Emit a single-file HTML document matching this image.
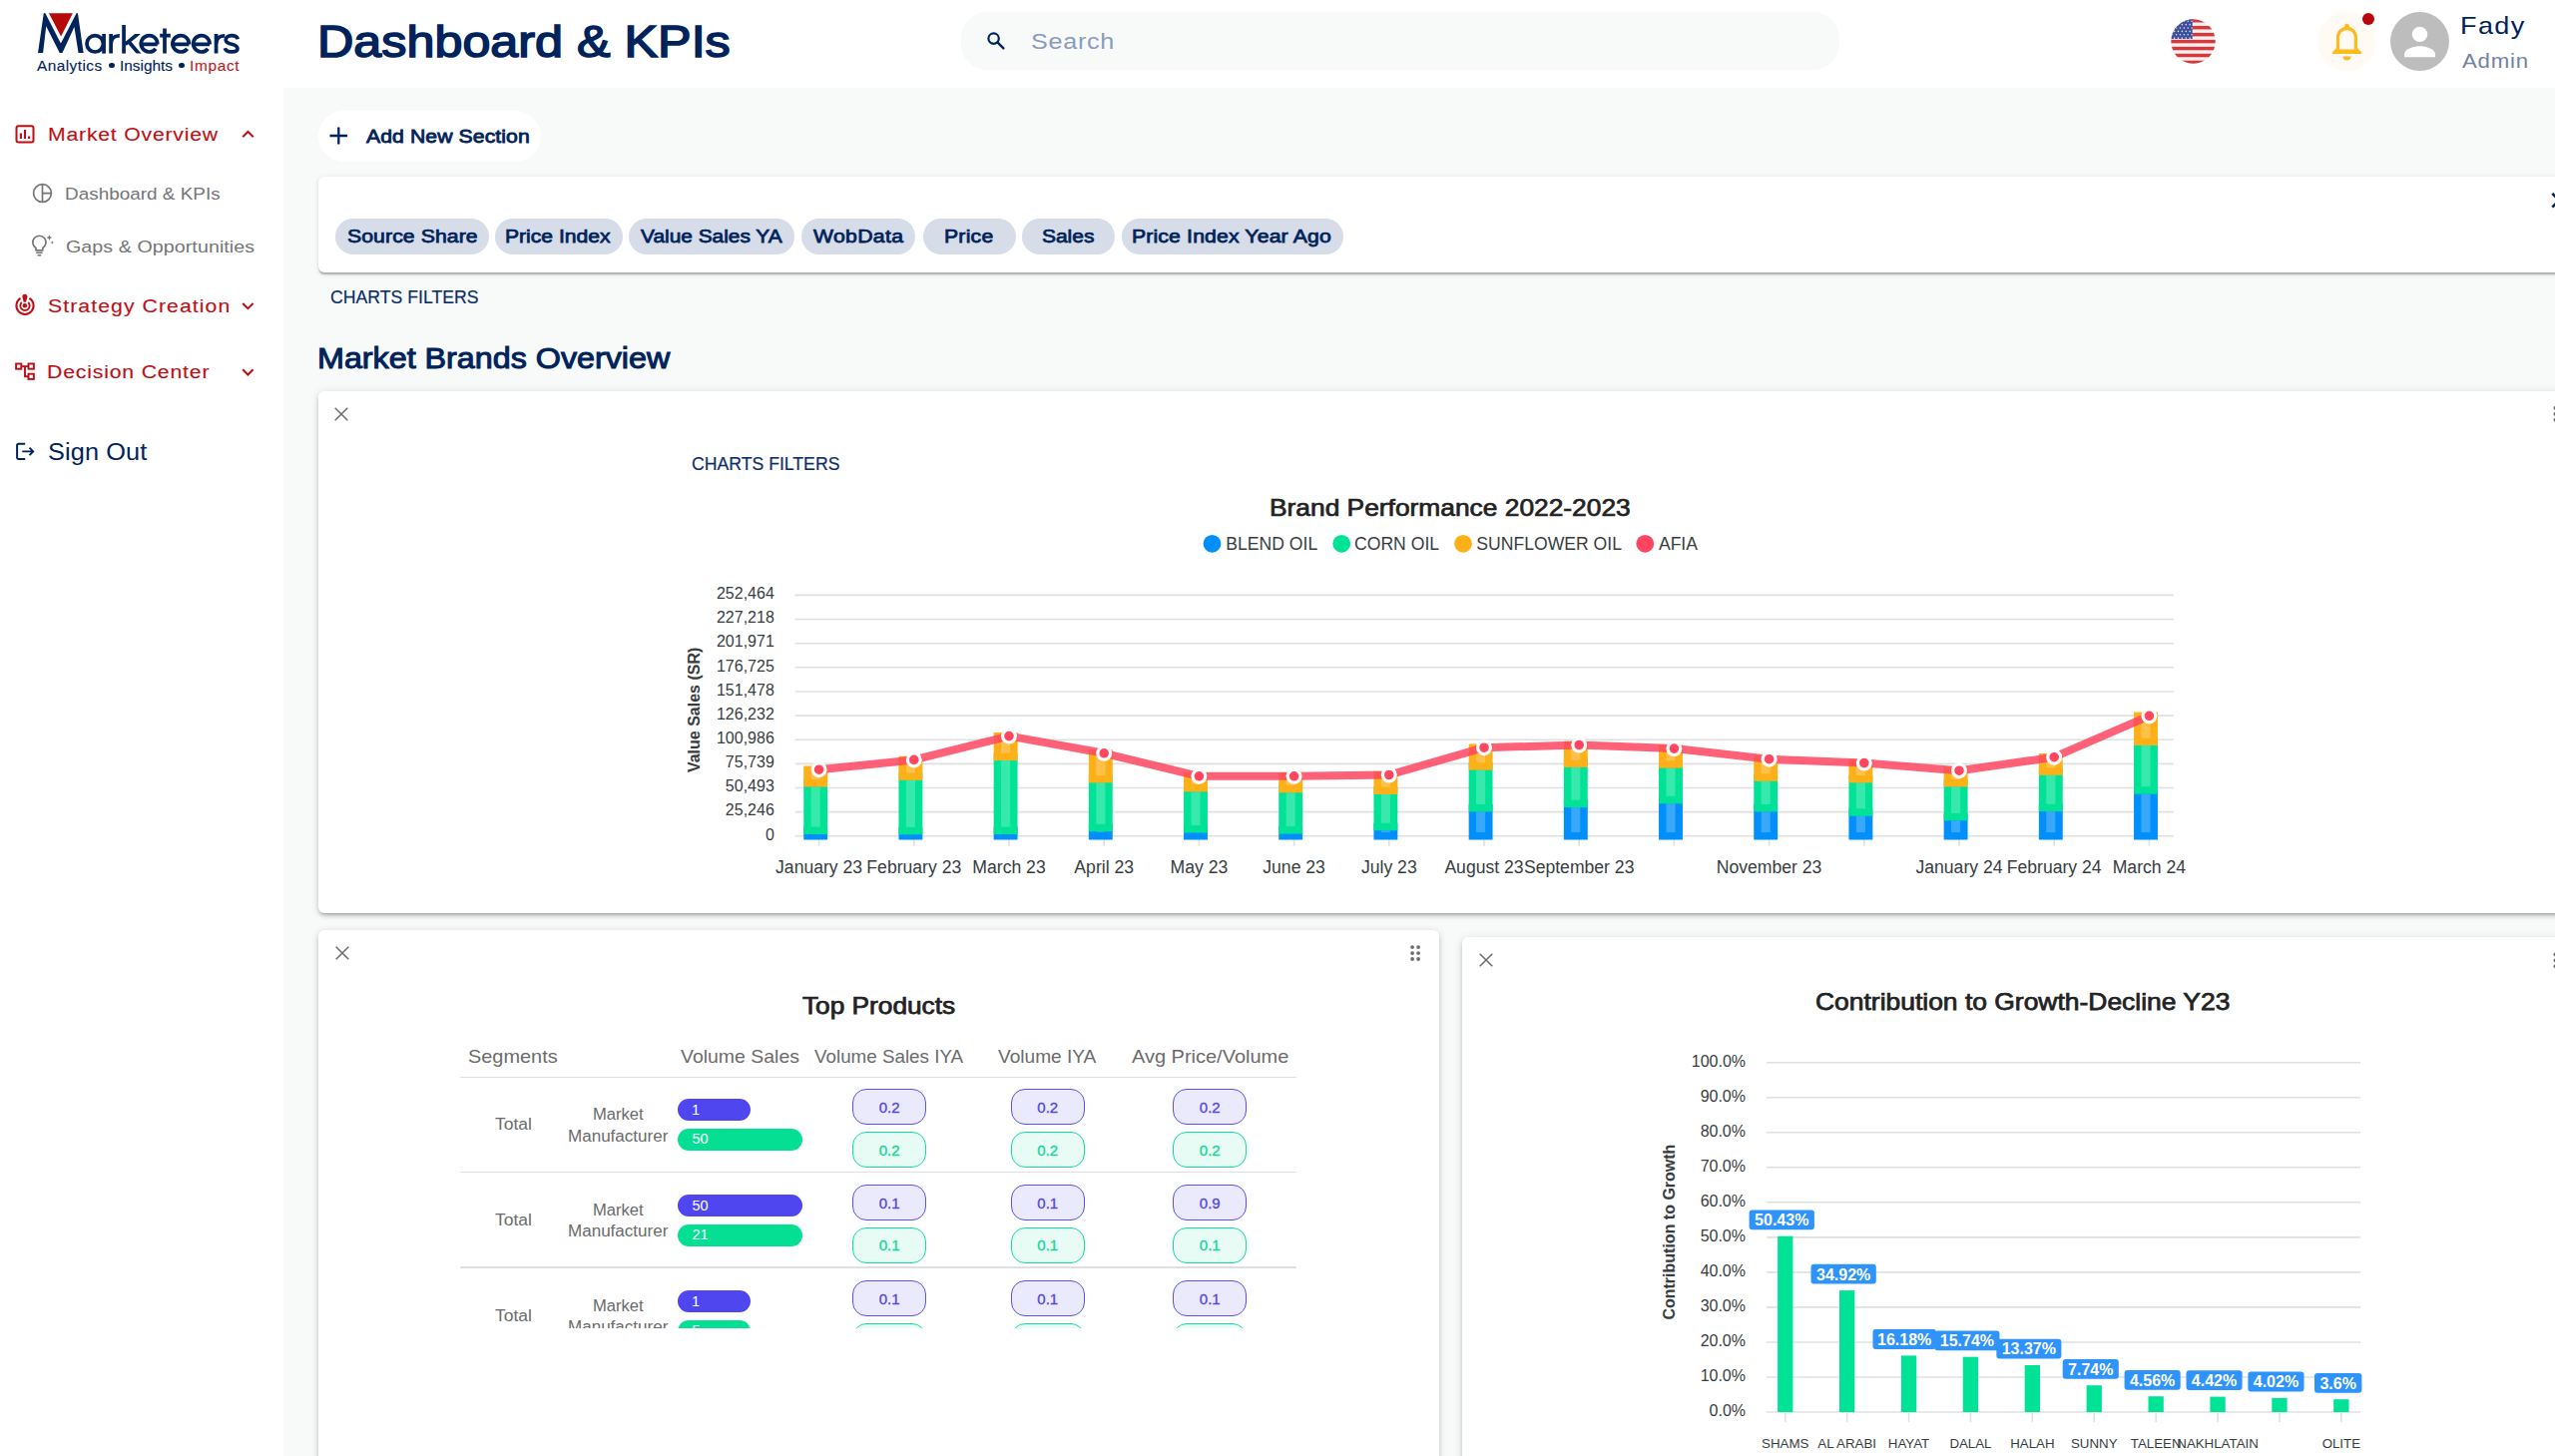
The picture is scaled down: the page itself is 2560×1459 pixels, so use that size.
<!DOCTYPE html>
<html><head><meta charset="utf-8"><title>Dashboard &amp; KPIs</title>
<style>
html,body{margin:0;padding:0;}
body{width:2560px;height:1459px;overflow:hidden;position:relative;background:#f8fafa;font-family:"Liberation Sans",sans-serif;}
.t{position:absolute;white-space:nowrap;line-height:normal;transform-origin:0 0;}
.a{position:absolute;}
.card{position:absolute;background:#fff;border-radius:6px;box-shadow:0 3px 3px -2px rgba(0,0,0,.2),0 3px 4px 0 rgba(0,0,0,.14),0 1px 8px 0 rgba(0,0,0,.12);}
.chip{position:absolute;background:#d6dce8;border-radius:18px;height:36px;top:218.5px;}
svg{position:absolute;overflow:visible;}
</style></head><body>
<div class="a" style="left:0;top:0;width:2560px;height:88px;background:#fff"></div>
<div class="a" style="left:0;top:0;width:283.5px;height:1459px;background:#fff"></div>
<svg style="left:30px;top:5px" width="220" height="78" viewBox="30 5 220 78">
<polygon points="48.99,13.2 72.87,13.2 61.13,36.52" fill="#b5080b"/>
<path d="M38.03,52.96 L43.75,13.4 L44.68,13.03 L45.4,13.3 L60.93,43.57 L76.6,13.3 L77.18,13.03 L78,13.4 L83.64,52.96 L78.55,52.96 L74.44,26.9 L62.5,52.96 L59.76,52.96 L46.25,26.14 L43.12,52.96 Z" fill="#01245c"/>
<g fill="none" stroke="#01245c" stroke-width="3.7">
<circle cx="95.2" cy="43.8" r="8.2"/><path d="M104.1,34 V53.6"/>
<path d="M111.1,34 V53.6 M111.1,44.5 C111.1,38.600 114.2,35.7 119.800,35.9"/>
<path d="M124.05,25 V53.6"/>
<path d="M125.5,44.400 L139.300,33 M128.600,41.2 L140.100,55" clip-path="url(#kc)"/>
<path d="M141.30,44.3 H157.70 M157.70,44.3 A8.2,8.2 0 1 0 156.00,48.8" />
<path d="M165,28.6 V53.6 M160.2,35.650 H170.8"/>
<path d="M172.90,44.3 H189.30 M189.30,44.3 A8.2,8.2 0 1 0 187.60,48.8" /><path d="M193.60,44.3 H210.00 M210.00,44.3 A8.2,8.2 0 1 0 208.30,48.8" />
<path d="M216.55,34 V53.6 M216.55,44.5 C216.55,38.600 219.650,35.7 225.250,35.9"/>
<path d="M238.3,39.2 C237.5,36.600 235,35.7 232,35.7 C228.3,35.7 226.2,37.600 226.2,40 C226.2,42.5 228.400,43.400 232,44.2 C235.8,45.050 238,46.100 238,48.7 C238,51 235.7,51.900 232,51.900 C228.3,51.900 226,50.600 225.3,48.2"/>
</g>
<defs><clipPath id="kc"><rect x="120" y="34" width="25" height="19.6"/></clipPath></defs>
</svg>
<span class="t" style="left:37.35px;top:57.53px;font-size:14px;color:#00235b;letter-spacing:0.403px;transform:scaleX(1.1000);-webkit-text-stroke:0.1px #00235b;">Analytics</span>
<span class="t" style="left:120.48px;top:57.53px;font-size:14px;color:#00235b;letter-spacing:0.000px;transform:scaleX(1.0989);-webkit-text-stroke:0.1px #00235b;">Insights</span>
<span class="t" style="left:190.18px;top:57.53px;font-size:14px;color:#c0161c;letter-spacing:0.600px;transform:scaleX(1.1000);-webkit-text-stroke:0.1px #c0161c;">Impact</span>
<div class="a" style="left:109.4px;top:63px;width:5.2px;height:5.2px;border-radius:50%;background:#00235b"></div>
<div class="a" style="left:179.4px;top:63px;width:5.2px;height:5.2px;border-radius:50%;background:#00235b"></div>
<span class="t" style="left:318.44px;top:17.33px;font-size:44.5px;color:#00235b;letter-spacing:-0.000px;transform:scaleX(1.1302);-webkit-text-stroke:1.6px #00235b;">Dashboard &amp; KPIs</span>
<div class="a" style="left:962.5px;top:11.7px;width:880.5px;height:58px;border-radius:26px;background:#f8fafa"></div>
<svg style="left:989px;top:32px" width="18" height="18" viewBox="0 0 18 18"><circle cx="6.6" cy="6.6" r="5.2" fill="none" stroke="#00235b" stroke-width="2.2"/><path d="M10.4,10.4 L16.4,16.4" stroke="#00235b" stroke-width="2.4" stroke-linecap="round"/></svg>
<span class="t" style="left:1032.50px;top:28.28px;font-size:22.9px;color:#8a9cbc;letter-spacing:0.634px;transform:scaleX(1.1000);">Search</span>
<svg style="left:2175.2px;top:18.6px" width="45" height="45" viewBox="0 0 44 44">
<defs><clipPath id="fc"><circle cx="22" cy="22" r="21.7"/></clipPath></defs>
<g clip-path="url(#fc)">
<rect width="44" height="44" fill="#f1f1f1"/>
<g fill="#d8383b">
<rect y="0" width="44" height="3.4"/><rect y="6.8" width="44" height="3.4"/><rect y="13.6" width="44" height="3.4"/><rect y="20.4" width="44" height="3.4"/><rect y="27.2" width="44" height="3.4"/><rect y="34" width="44" height="3.4"/><rect y="40.8" width="44" height="3.4"/>
</g>
<rect width="21.2" height="19.6" fill="#3c4f9e"/>
<circle cx="1.6" cy="2.2" r="0.75" fill="#fff" fill-opacity="0.85"/><circle cx="5.4" cy="2.2" r="0.75" fill="#fff" fill-opacity="0.85"/><circle cx="9.2" cy="2.2" r="0.75" fill="#fff" fill-opacity="0.85"/><circle cx="13.0" cy="2.2" r="0.75" fill="#fff" fill-opacity="0.85"/><circle cx="16.8" cy="2.2" r="0.75" fill="#fff" fill-opacity="0.85"/><circle cx="20.6" cy="2.2" r="0.75" fill="#fff" fill-opacity="0.85"/><circle cx="3.5" cy="5.5" r="0.75" fill="#fff" fill-opacity="0.85"/><circle cx="7.3" cy="5.5" r="0.75" fill="#fff" fill-opacity="0.85"/><circle cx="11.1" cy="5.5" r="0.75" fill="#fff" fill-opacity="0.85"/><circle cx="14.9" cy="5.5" r="0.75" fill="#fff" fill-opacity="0.85"/><circle cx="18.7" cy="5.5" r="0.75" fill="#fff" fill-opacity="0.85"/><circle cx="22.5" cy="5.5" r="0.75" fill="#fff" fill-opacity="0.85"/><circle cx="1.6" cy="8.8" r="0.75" fill="#fff" fill-opacity="0.85"/><circle cx="5.4" cy="8.8" r="0.75" fill="#fff" fill-opacity="0.85"/><circle cx="9.2" cy="8.8" r="0.75" fill="#fff" fill-opacity="0.85"/><circle cx="13.0" cy="8.8" r="0.75" fill="#fff" fill-opacity="0.85"/><circle cx="16.8" cy="8.8" r="0.75" fill="#fff" fill-opacity="0.85"/><circle cx="20.6" cy="8.8" r="0.75" fill="#fff" fill-opacity="0.85"/><circle cx="3.5" cy="12.1" r="0.75" fill="#fff" fill-opacity="0.85"/><circle cx="7.3" cy="12.1" r="0.75" fill="#fff" fill-opacity="0.85"/><circle cx="11.1" cy="12.1" r="0.75" fill="#fff" fill-opacity="0.85"/><circle cx="14.9" cy="12.1" r="0.75" fill="#fff" fill-opacity="0.85"/><circle cx="18.7" cy="12.1" r="0.75" fill="#fff" fill-opacity="0.85"/><circle cx="22.5" cy="12.1" r="0.75" fill="#fff" fill-opacity="0.85"/><circle cx="1.6" cy="15.4" r="0.75" fill="#fff" fill-opacity="0.85"/><circle cx="5.4" cy="15.4" r="0.75" fill="#fff" fill-opacity="0.85"/><circle cx="9.2" cy="15.4" r="0.75" fill="#fff" fill-opacity="0.85"/><circle cx="13.0" cy="15.4" r="0.75" fill="#fff" fill-opacity="0.85"/><circle cx="16.8" cy="15.4" r="0.75" fill="#fff" fill-opacity="0.85"/><circle cx="20.6" cy="15.4" r="0.75" fill="#fff" fill-opacity="0.85"/><circle cx="3.5" cy="18.7" r="0.75" fill="#fff" fill-opacity="0.85"/><circle cx="7.3" cy="18.7" r="0.75" fill="#fff" fill-opacity="0.85"/><circle cx="11.1" cy="18.7" r="0.75" fill="#fff" fill-opacity="0.85"/><circle cx="14.9" cy="18.7" r="0.75" fill="#fff" fill-opacity="0.85"/><circle cx="18.7" cy="18.7" r="0.75" fill="#fff" fill-opacity="0.85"/><circle cx="22.5" cy="18.7" r="0.75" fill="#fff" fill-opacity="0.85"/>
</g></svg>
<div class="a" style="left:2321.8px;top:11.7px;width:59px;height:59px;border-radius:50%;background:#fffaf3"></div>
<svg style="left:2334.7px;top:21.900px" width="33" height="39.6" viewBox="0 0 30 36">
<path d="M15,1.5 a2.2,2.2 0 0 1 2.2,2.2 v0.9 c4.6,1.1 7.4,5 7.4,9.9 v9.4 l3.6,3.6 v1.6 h-26.4 v-1.6 l3.6,-3.6 v-9.4 c0,-4.9 2.8,-8.8 7.4,-9.9 v-0.9 a2.2,2.2 0 0 1 2.2,-2.2 z M15,7.6 c-4,0 -6.7,3 -6.7,7 v10.4 h13.4 v-10.4 c0,-4 -2.7,-7 -6.7,-7 z" fill="#fdbb1c" fill-rule="evenodd"/>
<path d="M11.4,31.4 h7.2 a3.6,3.6 0 0 1 -7.2,0 z" fill="#fdbb1c"/>
</svg>
<div class="a" style="left:2367.3px;top:13px;width:12px;height:12px;border-radius:50%;background:#b9050b"></div>
<svg style="left:2395.3px;top:11.7px" width="59" height="59" viewBox="0 0 58 58">
<circle cx="29" cy="29" r="29" fill="#bdbdbd"/>
<circle cx="29" cy="22" r="7.6" fill="#fff"/>
<path d="M13.8,44.5 v-3.3 c0,-5 10.1,-7.6 15.2,-7.6 s15.2,2.600 15.2,7.6 v3.3 z" fill="#fff"/>
</svg>
<span class="t" style="left:2465.09px;top:11.94px;font-size:24.6px;color:#00235b;letter-spacing:1.247px;transform:scaleX(1.1000);">Fady</span>
<span class="t" style="left:2467.30px;top:49.72px;font-size:20.2px;color:#7283a3;letter-spacing:0.699px;transform:scaleX(1.1000);">Admin</span>
<svg style="left:14px;top:124px" width="22" height="22" viewBox="14 124 22 22">
<rect x="16.5" y="126.3" width="17" height="16.200" rx="2" fill="none" stroke="#c00d14" stroke-width="2"/>
<path d="M20.9,133.5 v5.5 M25,130 v9 M29.100,136.600 v2.4" stroke="#c00d14" stroke-width="2.1" fill="none"/>
</svg>
<span class="t" style="left:47.76px;top:123.79px;font-size:18.8px;color:#c00d14;letter-spacing:0.690px;transform:scaleX(1.1300);-webkit-text-stroke:0.12px #c00d14;">Market Overview</span>
<svg style="left:240px;top:128px" width="18" height="14" viewBox="240 128 18 14"><path d="M243.2,137.300 L248.5,132 L253.800,137.300" fill="none" stroke="#c00d14" stroke-width="2"/></svg>
<svg style="left:30px;top:182px" width="26" height="24" viewBox="30 182 26 24">
<circle cx="42.5" cy="193.6" r="8.9" fill="none" stroke="#737577" stroke-width="1.7"/>
<path d="M42.5,184.700 v17.8 M42.5,193.6 h8.9" stroke="#737577" stroke-width="1.7" fill="none"/></svg>
<span class="t" style="left:65.35px;top:184.45px;font-size:17.4px;color:#737577;letter-spacing:0.000px;transform:scaleX(1.0881);">Dashboard &amp; KPIs</span>
<svg style="left:30px;top:233px" width="26" height="26" viewBox="30 233 26 26">
<path d="M36,248.5 a6.6,6.6 0 1 1 6.8,0 v2.3 h-6.8 z" fill="none" stroke="#737577" stroke-width="1.7" stroke-linejoin="round"/>
<path d="M36.2,253.300 h6.4 M37.600,255.700 h3.6" stroke="#737577" stroke-width="1.5"/>
<path d="M49.400,235.300 l0.800,2 l2,0.800 l-2,0.800 l-0.800,2 l-0.800,-2 l-2,-0.800 l2,-0.800 z M52.3,241.300 l0.500,1.200 l1.200,0.500 l-1.200,0.500 l-0.500,1.200 l-0.500,-1.200 l-1.200,-0.500 l1.200,-0.500 z" fill="#737577"/>
</svg>
<span class="t" style="left:65.86px;top:237.15px;font-size:17.4px;color:#737577;letter-spacing:0.056px;transform:scaleX(1.1300);">Gaps &amp; Opportunities</span>
<svg style="left:13px;top:292px" width="24" height="26" viewBox="13 292 24 26">
<path d="M20.600,298.900 a8.6,8.6 0 1 0 8.800,0" fill="none" stroke="#c00d14" stroke-width="2"/>
<path d="M21.8,303 a4.700,4.700 0 1 0 6.4,0" fill="none" stroke="#c00d14" stroke-width="1.8"/>
<circle cx="24.9" cy="306.300" r="2.2" fill="#c00d14"/>
<path d="M22.4,297.2 a2.5,2.5 0 0 1 5,0 l-1.300,5.500 h-2.400 z" fill="#c00d14"/>
</svg>
<span class="t" style="left:48.21px;top:295.99px;font-size:18.8px;color:#c00d14;letter-spacing:0.942px;transform:scaleX(1.1300);-webkit-text-stroke:0.12px #c00d14;">Strategy Creation</span>
<svg style="left:240px;top:300px" width="18" height="14" viewBox="240 300 18 14"><path d="M243.2,304 L248.400,309.2 L253.600,304" fill="none" stroke="#c00d14" stroke-width="2"/></svg>
<svg style="left:13px;top:361px" width="24" height="22" viewBox="13 361 24 22">
<g fill="none" stroke="#c00d14" stroke-width="1.9">
<rect x="16.100" y="364.5" width="5.2" height="5.2"/>
<rect x="28.5" y="364.5" width="5.4" height="5.2"/>
<rect x="28.5" y="374.700" width="5.4" height="5.2"/>
<path d="M21.3,367.100 h7.2 M25,367.100 v10.200 h3.5"/>
</g></svg>
<span class="t" style="left:47.36px;top:362.19px;font-size:18.8px;color:#c00d14;letter-spacing:0.727px;transform:scaleX(1.1300);-webkit-text-stroke:0.12px #c00d14;">Decision Center</span>
<svg style="left:240px;top:366px" width="18" height="14" viewBox="240 366 18 14"><path d="M243.2,370.300 L248.400,375.5 L253.600,370.300" fill="none" stroke="#c00d14" stroke-width="2"/></svg>
<svg style="left:13px;top:441px" width="24" height="24" viewBox="13 441 24 24">
<path d="M25.2,444.800 h-6.600 a1.500,1.500 0 0 0 -1.500,1.500 v12.300 a1.500,1.500 0 0 0 1.500,1.500 h6.600" fill="none" stroke="#00235b" stroke-width="2"/>
<path d="M22.300,452.400 h10.600 M29.5,448.700 l3.700,3.700 l-3.700,3.700" fill="none" stroke="#00235b" stroke-width="1.9"/>
</svg>
<span class="t" style="left:48.20px;top:439.58px;font-size:23px;color:#00235b;letter-spacing:0.094px;transform:scaleX(1.1000);">Sign Out</span>
<div class="a" style="left:319px;top:110.5px;width:223px;height:51px;border-radius:26px;background:#fff"></div>
<svg style="left:329px;top:126px" width="20" height="20" viewBox="329 126 20 20"><path d="M339.300,127.600 v16.9 M330.5,136 h17.600" stroke="#00235b" stroke-width="2.3" fill="none"/></svg>
<span class="t" style="left:367.15px;top:125.69px;font-size:18.8px;color:#00235b;letter-spacing:0.061px;transform:scaleX(1.1300);-webkit-text-stroke:0.8px #00235b;">Add New Section</span>
<div class="card" style="left:319px;top:177px;width:2260px;height:95.800px;box-shadow:0 2.600px 1.6px -1.6px rgba(0,0,0,.15),0 1.6px 1.6px 0 rgba(0,0,0,.12),0 1.6px 4.8px 0 rgba(0,0,0,.1)"></div>
<svg style="left:2550px;top:190px" width="10" height="22" viewBox="2550 190 10 22"><path d="M2557.3,193.800 L2564,200.7 L2557.3,207.600" fill="none" stroke="#00235b" stroke-width="2.6"/></svg>
<div class="chip" style="left:336.4px;width:153.40000000000003px"></div>
<span class="t" style="left:347.68px;top:225.69px;font-size:18.8px;color:#00235b;letter-spacing:0.067px;transform:scaleX(1.1300);-webkit-text-stroke:0.75px #00235b;">Source Share</span>
<div class="chip" style="left:496.1px;width:127.5px"></div>
<span class="t" style="left:506.24px;top:225.69px;font-size:18.8px;color:#00235b;letter-spacing:0.000px;transform:scaleX(1.1228);-webkit-text-stroke:0.75px #00235b;">Price Index</span>
<div class="chip" style="left:630px;width:166.20000000000005px"></div>
<span class="t" style="left:642.18px;top:225.69px;font-size:18.8px;color:#00235b;letter-spacing:0.000px;transform:scaleX(1.1118);-webkit-text-stroke:0.75px #00235b;">Value Sales YA</span>
<div class="chip" style="left:802.6px;width:114.39999999999998px"></div>
<span class="t" style="left:814.67px;top:225.69px;font-size:18.8px;color:#00235b;letter-spacing:0.277px;transform:scaleX(1.1300);-webkit-text-stroke:0.75px #00235b;">WobData</span>
<div class="chip" style="left:924.7px;width:92.89999999999998px"></div>
<span class="t" style="left:946.08px;top:225.69px;font-size:18.8px;color:#00235b;letter-spacing:0.191px;transform:scaleX(1.1300);-webkit-text-stroke:0.75px #00235b;">Price</span>
<div class="chip" style="left:1024.1px;width:92.90000000000009px"></div>
<span class="t" style="left:1044.29px;top:225.69px;font-size:18.8px;color:#00235b;letter-spacing:0.000px;transform:scaleX(1.1146);-webkit-text-stroke:0.75px #00235b;">Sales</span>
<div class="chip" style="left:1124.2px;width:221.5px"></div>
<span class="t" style="left:1134.48px;top:225.69px;font-size:18.8px;color:#00235b;letter-spacing:0.124px;transform:scaleX(1.1300);-webkit-text-stroke:0.75px #00235b;">Price Index Year Ago</span>
<span class="t" style="left:330.70px;top:287.41px;font-size:19px;color:#0b2e66;letter-spacing:0.000px;transform:scaleX(0.9295);-webkit-text-stroke:0.2px #0b2e66;">CHARTS FILTERS</span>
<span class="t" style="left:318.00px;top:342.65px;font-size:28.9px;color:#00235b;letter-spacing:0.000px;transform:scaleX(1.1170);-webkit-text-stroke:1.0px #00235b;">Market Brands Overview</span>
<div class="card" style="left:319px;top:391.7px;width:2260px;height:523.5px"></div>
<div class="card" style="left:319px;top:931.8px;width:1123px;height:560px"></div>
<div class="card" style="left:1465.1px;top:938.8px;width:1120px;height:560px"></div>
<svg style="left:332.3px;top:404.8px" width="20" height="20" viewBox="-10 -10 20 20"><path d="M-6.3,-6.3 L6.3,6.3 M6.3,-6.3 L-6.3,6.3" stroke="#6c6c6f" stroke-width="1.5" fill="none"/></svg>
<span class="t" style="left:693.30px;top:453.91px;font-size:19px;color:#0b2e66;letter-spacing:0.000px;transform:scaleX(0.9289);-webkit-text-stroke:0.2px #0b2e66;">CHARTS FILTERS</span>
<span class="t" style="left:1271.84px;top:496.14px;font-size:23.6px;color:#222;letter-spacing:0.000px;transform:scaleX(1.1165);-webkit-text-stroke:0.7px #222;">Brand Performance 2022-2023</span>
<svg style="left:0;top:0" width="2560" height="1459" viewBox="0 0 2560 1459" font-family="Liberation Sans, sans-serif">
<circle cx="1214.5" cy="544.8" r="8.9" fill="#008ffb"/>
<text x="1228.3" y="550.7" font-size="17.6" fill="#373d3f">BLEND OIL</text>
<circle cx="1344.2" cy="544.8" r="8.9" fill="#00e396"/>
<text x="1357" y="550.7" font-size="17.6" fill="#373d3f">CORN OIL</text>
<circle cx="1466" cy="544.8" r="8.9" fill="#feb019"/>
<text x="1479.3" y="550.7" font-size="17.6" fill="#373d3f">SUNFLOWER OIL</text>
<circle cx="1648.3" cy="544.8" r="8.9" fill="#ff4560"/>
<text x="1661.9" y="550.7" font-size="17.6" fill="#373d3f">AFIA</text>
<line x1="796.6" x2="2177.9" y1="596.40" y2="596.40" stroke="#e0e0e0" stroke-width="1.6"/>
<text x="775.8" y="600.10" font-size="16" fill="#373d3f" text-anchor="end">252,464</text>
<line x1="796.6" x2="2177.9" y1="620.54" y2="620.54" stroke="#e0e0e0" stroke-width="1.6"/>
<text x="775.8" y="624.24" font-size="16" fill="#373d3f" text-anchor="end">227,218</text>
<line x1="796.6" x2="2177.9" y1="644.68" y2="644.68" stroke="#e0e0e0" stroke-width="1.6"/>
<text x="775.8" y="648.38" font-size="16" fill="#373d3f" text-anchor="end">201,971</text>
<line x1="796.6" x2="2177.9" y1="668.82" y2="668.82" stroke="#e0e0e0" stroke-width="1.6"/>
<text x="775.8" y="672.52" font-size="16" fill="#373d3f" text-anchor="end">176,725</text>
<line x1="796.6" x2="2177.9" y1="692.96" y2="692.96" stroke="#e0e0e0" stroke-width="1.6"/>
<text x="775.8" y="696.66" font-size="16" fill="#373d3f" text-anchor="end">151,478</text>
<line x1="796.6" x2="2177.9" y1="717.10" y2="717.10" stroke="#e0e0e0" stroke-width="1.6"/>
<text x="775.8" y="720.80" font-size="16" fill="#373d3f" text-anchor="end">126,232</text>
<line x1="796.6" x2="2177.9" y1="741.24" y2="741.24" stroke="#e0e0e0" stroke-width="1.6"/>
<text x="775.8" y="744.94" font-size="16" fill="#373d3f" text-anchor="end">100,986</text>
<line x1="796.6" x2="2177.9" y1="765.38" y2="765.38" stroke="#e0e0e0" stroke-width="1.6"/>
<text x="775.8" y="769.08" font-size="16" fill="#373d3f" text-anchor="end">75,739</text>
<line x1="796.6" x2="2177.9" y1="789.52" y2="789.52" stroke="#e0e0e0" stroke-width="1.6"/>
<text x="775.8" y="793.22" font-size="16" fill="#373d3f" text-anchor="end">50,493</text>
<line x1="796.6" x2="2177.9" y1="813.66" y2="813.66" stroke="#e0e0e0" stroke-width="1.6"/>
<text x="775.8" y="817.36" font-size="16" fill="#373d3f" text-anchor="end">25,246</text>
<line x1="796.6" x2="2177.9" y1="837.80" y2="837.80" stroke="#e0e0e0" stroke-width="1.6"/>
<text x="775.8" y="841.50" font-size="16" fill="#373d3f" text-anchor="end">0</text>
<text transform="translate(700.8,711.4) rotate(-90)" font-size="16" font-weight="700" fill="#373d3f" text-anchor="middle">Value Sales (SR)</text>
<line x1="820.60" x2="820.60" y1="838.5999999999999" y2="847.7" stroke="#e0e0e0" stroke-width="1.6"/>
<line x1="915.80" x2="915.80" y1="838.5999999999999" y2="847.7" stroke="#e0e0e0" stroke-width="1.6"/>
<line x1="1011.00" x2="1011.00" y1="838.5999999999999" y2="847.7" stroke="#e0e0e0" stroke-width="1.6"/>
<line x1="1106.20" x2="1106.20" y1="838.5999999999999" y2="847.7" stroke="#e0e0e0" stroke-width="1.6"/>
<line x1="1201.40" x2="1201.40" y1="838.5999999999999" y2="847.7" stroke="#e0e0e0" stroke-width="1.6"/>
<line x1="1296.60" x2="1296.60" y1="838.5999999999999" y2="847.7" stroke="#e0e0e0" stroke-width="1.6"/>
<line x1="1391.80" x2="1391.80" y1="838.5999999999999" y2="847.7" stroke="#e0e0e0" stroke-width="1.6"/>
<line x1="1487.00" x2="1487.00" y1="838.5999999999999" y2="847.7" stroke="#e0e0e0" stroke-width="1.6"/>
<line x1="1582.20" x2="1582.20" y1="838.5999999999999" y2="847.7" stroke="#e0e0e0" stroke-width="1.6"/>
<line x1="1677.40" x2="1677.40" y1="838.5999999999999" y2="847.7" stroke="#e0e0e0" stroke-width="1.6"/>
<line x1="1772.60" x2="1772.60" y1="838.5999999999999" y2="847.7" stroke="#e0e0e0" stroke-width="1.6"/>
<line x1="1867.80" x2="1867.80" y1="838.5999999999999" y2="847.7" stroke="#e0e0e0" stroke-width="1.6"/>
<line x1="1963.00" x2="1963.00" y1="838.5999999999999" y2="847.7" stroke="#e0e0e0" stroke-width="1.6"/>
<line x1="2058.20" x2="2058.20" y1="838.5999999999999" y2="847.7" stroke="#e0e0e0" stroke-width="1.6"/>
<line x1="2153.40" x2="2153.40" y1="838.5999999999999" y2="847.7" stroke="#e0e0e0" stroke-width="1.6"/>
<rect x="808.95" y="832.30" width="16.5" height="5.50" fill="#38a8fc" stroke="#008ffb" stroke-width="7.4"/>
<rect x="808.95" y="784.80" width="16.5" height="47.50" fill="#38e9ad" stroke="#00e396" stroke-width="7.4"/>
<rect x="808.95" y="771.20" width="16.5" height="13.60" fill="#fec14c" stroke="#feb019" stroke-width="7.4"/>
<rect x="904.15" y="832.60" width="16.5" height="5.20" fill="#38a8fc" stroke="#008ffb" stroke-width="7.4"/>
<rect x="904.15" y="778.10" width="16.5" height="54.50" fill="#38e9ad" stroke="#00e396" stroke-width="7.4"/>
<rect x="904.15" y="761.40" width="16.5" height="16.70" fill="#fec14c" stroke="#feb019" stroke-width="7.4"/>
<rect x="999.35" y="832.30" width="16.5" height="5.50" fill="#38a8fc" stroke="#008ffb" stroke-width="7.4"/>
<rect x="999.35" y="758.40" width="16.5" height="73.90" fill="#38e9ad" stroke="#00e396" stroke-width="7.4"/>
<rect x="999.35" y="737.60" width="16.5" height="20.80" fill="#fec14c" stroke="#feb019" stroke-width="7.4"/>
<rect x="1094.55" y="829.50" width="16.5" height="8.30" fill="#38a8fc" stroke="#008ffb" stroke-width="7.4"/>
<rect x="1094.55" y="780.70" width="16.5" height="48.80" fill="#38e9ad" stroke="#00e396" stroke-width="7.4"/>
<rect x="1094.55" y="754.80" width="16.5" height="25.90" fill="#fec14c" stroke="#feb019" stroke-width="7.4"/>
<rect x="1189.75" y="830.80" width="16.5" height="7.00" fill="#38a8fc" stroke="#008ffb" stroke-width="7.4"/>
<rect x="1189.75" y="789.60" width="16.5" height="41.20" fill="#38e9ad" stroke="#00e396" stroke-width="7.4"/>
<rect x="1189.75" y="777.80" width="16.5" height="11.80" fill="#fec14c" stroke="#feb019" stroke-width="7.4"/>
<rect x="1284.95" y="831.80" width="16.5" height="6.00" fill="#38a8fc" stroke="#008ffb" stroke-width="7.4"/>
<rect x="1284.95" y="790.60" width="16.5" height="41.20" fill="#38e9ad" stroke="#00e396" stroke-width="7.4"/>
<rect x="1284.95" y="777.80" width="16.5" height="12.80" fill="#fec14c" stroke="#feb019" stroke-width="7.4"/>
<rect x="1380.15" y="828.50" width="16.5" height="9.30" fill="#38a8fc" stroke="#008ffb" stroke-width="7.4"/>
<rect x="1380.15" y="792.30" width="16.5" height="36.20" fill="#38e9ad" stroke="#00e396" stroke-width="7.4"/>
<rect x="1380.15" y="776.50" width="16.5" height="15.80" fill="#fec14c" stroke="#feb019" stroke-width="7.4"/>
<rect x="1475.35" y="809.70" width="16.5" height="28.10" fill="#38a8fc" stroke="#008ffb" stroke-width="7.4"/>
<rect x="1475.35" y="767.90" width="16.5" height="41.80" fill="#38e9ad" stroke="#00e396" stroke-width="7.4"/>
<rect x="1475.35" y="749.20" width="16.5" height="18.70" fill="#fec14c" stroke="#feb019" stroke-width="7.4"/>
<rect x="1570.55" y="805.40" width="16.5" height="32.40" fill="#38a8fc" stroke="#008ffb" stroke-width="7.4"/>
<rect x="1570.55" y="765.20" width="16.5" height="40.20" fill="#38e9ad" stroke="#00e396" stroke-width="7.4"/>
<rect x="1570.55" y="746.50" width="16.5" height="18.70" fill="#fec14c" stroke="#feb019" stroke-width="7.4"/>
<rect x="1665.75" y="801.50" width="16.5" height="36.30" fill="#38a8fc" stroke="#008ffb" stroke-width="7.4"/>
<rect x="1665.75" y="765.90" width="16.5" height="35.60" fill="#38e9ad" stroke="#00e396" stroke-width="7.4"/>
<rect x="1665.75" y="750.10" width="16.5" height="15.80" fill="#fec14c" stroke="#feb019" stroke-width="7.4"/>
<rect x="1760.95" y="809.70" width="16.5" height="28.10" fill="#38a8fc" stroke="#008ffb" stroke-width="7.4"/>
<rect x="1760.95" y="779.10" width="16.5" height="30.60" fill="#38e9ad" stroke="#00e396" stroke-width="7.4"/>
<rect x="1760.95" y="760.70" width="16.5" height="18.40" fill="#fec14c" stroke="#feb019" stroke-width="7.4"/>
<rect x="1856.15" y="814.00" width="16.5" height="23.80" fill="#38a8fc" stroke="#008ffb" stroke-width="7.4"/>
<rect x="1856.15" y="780.70" width="16.5" height="33.30" fill="#38e9ad" stroke="#00e396" stroke-width="7.4"/>
<rect x="1856.15" y="764.60" width="16.5" height="16.10" fill="#fec14c" stroke="#feb019" stroke-width="7.4"/>
<rect x="1951.35" y="818.60" width="16.5" height="19.20" fill="#38a8fc" stroke="#008ffb" stroke-width="7.4"/>
<rect x="1951.35" y="784.70" width="16.5" height="33.90" fill="#38e9ad" stroke="#00e396" stroke-width="7.4"/>
<rect x="1951.35" y="772.20" width="16.5" height="12.50" fill="#fec14c" stroke="#feb019" stroke-width="7.4"/>
<rect x="2046.55" y="809.40" width="16.5" height="28.40" fill="#38a8fc" stroke="#008ffb" stroke-width="7.4"/>
<rect x="2046.55" y="773.10" width="16.5" height="36.30" fill="#38e9ad" stroke="#00e396" stroke-width="7.4"/>
<rect x="2046.55" y="758.70" width="16.5" height="14.40" fill="#fec14c" stroke="#feb019" stroke-width="7.4"/>
<rect x="2141.75" y="791.90" width="16.5" height="45.90" fill="#38a8fc" stroke="#008ffb" stroke-width="7.4"/>
<rect x="2141.75" y="743.30" width="16.5" height="48.60" fill="#38e9ad" stroke="#00e396" stroke-width="7.4"/>
<rect x="2141.75" y="717.30" width="16.5" height="26.00" fill="#fec14c" stroke="#feb019" stroke-width="7.4"/>
<polyline points="820.60,771.20 915.80,761.40 1011.00,737.60 1106.20,754.80 1201.40,777.80 1296.60,777.80 1391.80,776.50 1487.00,749.20 1582.20,746.50 1677.40,750.10 1772.60,760.70 1867.80,764.60 1963.00,772.20 2058.20,758.70 2153.40,717.30" fill="none" stroke="#ff4560" stroke-opacity="0.85" stroke-width="8" stroke-linejoin="round" stroke-linecap="butt"/>
<circle cx="820.60" cy="771.20" r="6.4" fill="#ff4560" stroke="#fff" stroke-width="3.2"/>
<circle cx="915.80" cy="761.40" r="6.4" fill="#ff4560" stroke="#fff" stroke-width="3.2"/>
<circle cx="1011.00" cy="737.60" r="6.4" fill="#ff4560" stroke="#fff" stroke-width="3.2"/>
<circle cx="1106.20" cy="754.80" r="6.4" fill="#ff4560" stroke="#fff" stroke-width="3.2"/>
<circle cx="1201.40" cy="777.80" r="6.4" fill="#ff4560" stroke="#fff" stroke-width="3.2"/>
<circle cx="1296.60" cy="777.80" r="6.4" fill="#ff4560" stroke="#fff" stroke-width="3.2"/>
<circle cx="1391.80" cy="776.50" r="6.4" fill="#ff4560" stroke="#fff" stroke-width="3.2"/>
<circle cx="1487.00" cy="749.20" r="6.4" fill="#ff4560" stroke="#fff" stroke-width="3.2"/>
<circle cx="1582.20" cy="746.50" r="6.4" fill="#ff4560" stroke="#fff" stroke-width="3.2"/>
<circle cx="1677.40" cy="750.10" r="6.4" fill="#ff4560" stroke="#fff" stroke-width="3.2"/>
<circle cx="1772.60" cy="760.70" r="6.4" fill="#ff4560" stroke="#fff" stroke-width="3.2"/>
<circle cx="1867.80" cy="764.60" r="6.4" fill="#ff4560" stroke="#fff" stroke-width="3.2"/>
<circle cx="1963.00" cy="772.20" r="6.4" fill="#ff4560" stroke="#fff" stroke-width="3.2"/>
<circle cx="2058.20" cy="758.70" r="6.4" fill="#ff4560" stroke="#fff" stroke-width="3.2"/>
<circle cx="2153.40" cy="717.30" r="6.4" fill="#ff4560" stroke="#fff" stroke-width="3.2"/>
<text x="820.60" y="875.1" font-size="17.6" fill="#373d3f" text-anchor="middle">January 23</text>
<text x="915.80" y="875.1" font-size="17.6" fill="#373d3f" text-anchor="middle">February 23</text>
<text x="1011.00" y="875.1" font-size="17.6" fill="#373d3f" text-anchor="middle">March 23</text>
<text x="1106.20" y="875.1" font-size="17.6" fill="#373d3f" text-anchor="middle">April 23</text>
<text x="1201.40" y="875.1" font-size="17.6" fill="#373d3f" text-anchor="middle">May 23</text>
<text x="1296.60" y="875.1" font-size="17.6" fill="#373d3f" text-anchor="middle">June 23</text>
<text x="1391.80" y="875.1" font-size="17.6" fill="#373d3f" text-anchor="middle">July 23</text>
<text x="1487.00" y="875.1" font-size="17.6" fill="#373d3f" text-anchor="middle">August 23</text>
<text x="1582.20" y="875.1" font-size="17.6" fill="#373d3f" text-anchor="middle">September 23</text>
<text x="1772.60" y="875.1" font-size="17.6" fill="#373d3f" text-anchor="middle">November 23</text>
<text x="1963.00" y="875.1" font-size="17.6" fill="#373d3f" text-anchor="middle">January 24</text>
<text x="2058.20" y="875.1" font-size="17.6" fill="#373d3f" text-anchor="middle">February 24</text>
<text x="2153.40" y="875.1" font-size="17.6" fill="#373d3f" text-anchor="middle">March 24</text>
</svg>
<svg style="left:332.5px;top:944.8px" width="20" height="20" viewBox="-10 -10 20 20"><path d="M-6.3,-6.3 L6.3,6.3 M6.3,-6.3 L-6.3,6.3" stroke="#6c6c6f" stroke-width="1.5" fill="none"/></svg>
<svg style="left:0;top:0" width="2560" height="1459"><circle cx="1415.1" cy="949.1" r="1.9" fill="#6e6e72"/><circle cx="1415.1" cy="955.1" r="1.9" fill="#6e6e72"/><circle cx="1415.1" cy="961" r="1.9" fill="#6e6e72"/><circle cx="1421.1" cy="949.1" r="1.9" fill="#6e6e72"/><circle cx="1421.1" cy="955.1" r="1.9" fill="#6e6e72"/><circle cx="1421.1" cy="961" r="1.9" fill="#6e6e72"/><circle cx="2560.4" cy="408.9" r="1.9" fill="#6e6e72"/><circle cx="2560.4" cy="414.9" r="1.9" fill="#6e6e72"/><circle cx="2560.4" cy="420.8" r="1.9" fill="#6e6e72"/><circle cx="2560.4" cy="956.4" r="1.9" fill="#6e6e72"/><circle cx="2560.4" cy="962.4" r="1.9" fill="#6e6e72"/><circle cx="2560.4" cy="968.3" r="1.9" fill="#6e6e72"/></svg>
<span class="t" style="left:803.92px;top:995.44px;font-size:23.6px;color:#222;letter-spacing:0.000px;transform:scaleX(1.1118);-webkit-text-stroke:0.75px #222;">Top Products</span>
<span class="t" style="left:468.69px;top:1047.57px;font-size:18.6px;color:#6b6b6b;letter-spacing:-0.000px;transform:scaleX(1.0710);">Segments</span>
<span class="t" style="left:681.90px;top:1047.57px;font-size:18.6px;color:#6b6b6b;letter-spacing:0.000px;transform:scaleX(1.0462);">Volume Sales</span>
<span class="t" style="left:816.20px;top:1047.57px;font-size:18.6px;color:#6b6b6b;letter-spacing:0.000px;transform:scaleX(1.0109);">Volume Sales IYA</span>
<span class="t" style="left:1000.40px;top:1047.57px;font-size:18.6px;color:#6b6b6b;letter-spacing:0.000px;transform:scaleX(1.0269);">Volume IYA</span>
<span class="t" style="left:1134.30px;top:1047.57px;font-size:18.6px;color:#6b6b6b;letter-spacing:0.000px;transform:scaleX(1.0742);">Avg Price/Volume</span>
<div class="a" style="left:461.4px;top:1078.9px;width:838px;height:1.3px;background:#e0e0e0"></div>
<div class="a" id="tbl" style="left:455px;top:1080px;width:850px;height:250.9px;overflow:hidden">
<span class="t" style="left:40.98px;top:38.12px;font-size:16px;color:#6b6b6b;letter-spacing:0.000px;transform:scaleX(1.0923);">Total</span>
<span class="t" style="left:138.75px;top:27.72px;font-size:16px;color:#6b6b6b;letter-spacing:-0.000px;transform:scaleX(1.0366);">Market</span>
<span class="t" style="left:113.97px;top:49.52px;font-size:16px;color:#6b6b6b;letter-spacing:0.000px;transform:scaleX(1.0645);">Manufacturer</span>
<div class="a" style="left:224.20000000000005px;top:21.3px;width:72.7px;height:22px;border-radius:11px;background:#4f46f0"></div>
<span class="t" style="left:237.90px;top:24.08px;font-size:14.5px;color:#fff;letter-spacing:0.000px;">1</span>
<div class="a" style="left:224.20000000000005px;top:50.7px;width:124.5px;height:22px;border-radius:11px;background:#05df94"></div>
<span class="t" style="left:238.40px;top:53.48px;font-size:14.5px;color:#fff;letter-spacing:0.000px;">50</span>
<div class="a" style="box-sizing:border-box;left:399.0px;top:11.4px;width:74.2px;height:35.6px;border-radius:14px;border:1.6px solid #5a50f0;background:#ebeafd"></div>
<span class="t" style="left:425.73px;top:20.72px;font-size:15px;color:#4f46e5;letter-spacing:0.000px;-webkit-text-stroke:0.3px #4f46e5;">0.2</span>
<div class="a" style="box-sizing:border-box;left:399.0px;top:54.2px;width:74.2px;height:35.6px;border-radius:14px;border:1.6px solid #10e09b;background:#e8fbf4"></div>
<span class="t" style="left:425.73px;top:63.52px;font-size:15px;color:#0fd892;letter-spacing:0.000px;-webkit-text-stroke:0.3px #0fd892;">0.2</span>
<div class="a" style="box-sizing:border-box;left:557.6px;top:11.4px;width:74.2px;height:35.6px;border-radius:14px;border:1.6px solid #5a50f0;background:#ebeafd"></div>
<span class="t" style="left:584.33px;top:20.72px;font-size:15px;color:#4f46e5;letter-spacing:0.000px;-webkit-text-stroke:0.3px #4f46e5;">0.2</span>
<div class="a" style="box-sizing:border-box;left:557.6px;top:54.2px;width:74.2px;height:35.6px;border-radius:14px;border:1.6px solid #10e09b;background:#e8fbf4"></div>
<span class="t" style="left:584.33px;top:63.52px;font-size:15px;color:#0fd892;letter-spacing:0.000px;-webkit-text-stroke:0.3px #0fd892;">0.2</span>
<div class="a" style="box-sizing:border-box;left:720.1px;top:11.4px;width:74.2px;height:35.6px;border-radius:14px;border:1.6px solid #5a50f0;background:#ebeafd"></div>
<span class="t" style="left:746.83px;top:20.72px;font-size:15px;color:#4f46e5;letter-spacing:0.000px;-webkit-text-stroke:0.3px #4f46e5;">0.2</span>
<div class="a" style="box-sizing:border-box;left:720.1px;top:54.2px;width:74.2px;height:35.6px;border-radius:14px;border:1.6px solid #10e09b;background:#e8fbf4"></div>
<span class="t" style="left:746.83px;top:63.52px;font-size:15px;color:#0fd892;letter-spacing:0.000px;-webkit-text-stroke:0.3px #0fd892;">0.2</span>
<div class="a" style="left:6.4px;top:93.5px;width:838px;height:1.3px;background:#e0e0e0"></div>
<span class="t" style="left:40.98px;top:134.02px;font-size:16px;color:#6b6b6b;letter-spacing:0.000px;transform:scaleX(1.0923);">Total</span>
<span class="t" style="left:138.75px;top:123.62px;font-size:16px;color:#6b6b6b;letter-spacing:-0.000px;transform:scaleX(1.0366);">Market</span>
<span class="t" style="left:113.97px;top:145.42px;font-size:16px;color:#6b6b6b;letter-spacing:0.000px;transform:scaleX(1.0645);">Manufacturer</span>
<div class="a" style="left:224.20000000000005px;top:117.2px;width:124.5px;height:22px;border-radius:11px;background:#4f46f0"></div>
<span class="t" style="left:238.40px;top:119.98px;font-size:14.5px;color:#fff;letter-spacing:0.000px;">50</span>
<div class="a" style="left:224.20000000000005px;top:146.6px;width:124.5px;height:22px;border-radius:11px;background:#05df94"></div>
<span class="t" style="left:238.40px;top:149.38px;font-size:14.5px;color:#fff;letter-spacing:0.000px;">21</span>
<div class="a" style="box-sizing:border-box;left:399.0px;top:107.3px;width:74.2px;height:35.6px;border-radius:14px;border:1.6px solid #5a50f0;background:#ebeafd"></div>
<span class="t" style="left:425.73px;top:116.63px;font-size:15px;color:#4f46e5;letter-spacing:0.000px;-webkit-text-stroke:0.3px #4f46e5;">0.1</span>
<div class="a" style="box-sizing:border-box;left:399.0px;top:150.1px;width:74.2px;height:35.6px;border-radius:14px;border:1.6px solid #10e09b;background:#e8fbf4"></div>
<span class="t" style="left:425.73px;top:159.43px;font-size:15px;color:#0fd892;letter-spacing:0.000px;-webkit-text-stroke:0.3px #0fd892;">0.1</span>
<div class="a" style="box-sizing:border-box;left:557.6px;top:107.3px;width:74.2px;height:35.6px;border-radius:14px;border:1.6px solid #5a50f0;background:#ebeafd"></div>
<span class="t" style="left:584.33px;top:116.63px;font-size:15px;color:#4f46e5;letter-spacing:0.000px;-webkit-text-stroke:0.3px #4f46e5;">0.1</span>
<div class="a" style="box-sizing:border-box;left:557.6px;top:150.1px;width:74.2px;height:35.6px;border-radius:14px;border:1.6px solid #10e09b;background:#e8fbf4"></div>
<span class="t" style="left:584.33px;top:159.43px;font-size:15px;color:#0fd892;letter-spacing:0.000px;-webkit-text-stroke:0.3px #0fd892;">0.1</span>
<div class="a" style="box-sizing:border-box;left:720.1px;top:107.3px;width:74.2px;height:35.6px;border-radius:14px;border:1.6px solid #5a50f0;background:#ebeafd"></div>
<span class="t" style="left:746.83px;top:116.63px;font-size:15px;color:#4f46e5;letter-spacing:0.000px;-webkit-text-stroke:0.3px #4f46e5;">0.9</span>
<div class="a" style="box-sizing:border-box;left:720.1px;top:150.1px;width:74.2px;height:35.6px;border-radius:14px;border:1.6px solid #10e09b;background:#e8fbf4"></div>
<span class="t" style="left:746.83px;top:159.43px;font-size:15px;color:#0fd892;letter-spacing:0.000px;-webkit-text-stroke:0.3px #0fd892;">0.1</span>
<div class="a" style="left:6.4px;top:189.4px;width:838px;height:1.3px;background:#e0e0e0"></div>
<span class="t" style="left:40.98px;top:229.92px;font-size:16px;color:#6b6b6b;letter-spacing:0.000px;transform:scaleX(1.0923);">Total</span>
<span class="t" style="left:138.75px;top:219.52px;font-size:16px;color:#6b6b6b;letter-spacing:-0.000px;transform:scaleX(1.0366);">Market</span>
<span class="t" style="left:113.97px;top:241.32px;font-size:16px;color:#6b6b6b;letter-spacing:0.000px;transform:scaleX(1.0645);">Manufacturer</span>
<div class="a" style="left:224.20000000000005px;top:213.1px;width:72.7px;height:22px;border-radius:11px;background:#4f46f0"></div>
<span class="t" style="left:237.90px;top:215.88px;font-size:14.5px;color:#fff;letter-spacing:0.000px;">1</span>
<div class="a" style="left:224.20000000000005px;top:242.5px;width:72.7px;height:22px;border-radius:11px;background:#05df94"></div>
<span class="t" style="left:238.40px;top:245.28px;font-size:14.5px;color:#fff;letter-spacing:0.000px;">5</span>
<div class="a" style="box-sizing:border-box;left:399.0px;top:203.2px;width:74.2px;height:35.6px;border-radius:14px;border:1.6px solid #5a50f0;background:#ebeafd"></div>
<span class="t" style="left:425.73px;top:212.52px;font-size:15px;color:#4f46e5;letter-spacing:0.000px;-webkit-text-stroke:0.3px #4f46e5;">0.1</span>
<div class="a" style="box-sizing:border-box;left:399.0px;top:246.0px;width:74.2px;height:35.6px;border-radius:14px;border:1.6px solid #10e09b;background:#e8fbf4"></div>
<span class="t" style="left:425.73px;top:255.32px;font-size:15px;color:#0fd892;letter-spacing:0.000px;-webkit-text-stroke:0.3px #0fd892;">0.1</span>
<div class="a" style="box-sizing:border-box;left:557.6px;top:203.2px;width:74.2px;height:35.6px;border-radius:14px;border:1.6px solid #5a50f0;background:#ebeafd"></div>
<span class="t" style="left:584.33px;top:212.52px;font-size:15px;color:#4f46e5;letter-spacing:0.000px;-webkit-text-stroke:0.3px #4f46e5;">0.1</span>
<div class="a" style="box-sizing:border-box;left:557.6px;top:246.0px;width:74.2px;height:35.6px;border-radius:14px;border:1.6px solid #10e09b;background:#e8fbf4"></div>
<span class="t" style="left:584.33px;top:255.32px;font-size:15px;color:#0fd892;letter-spacing:0.000px;-webkit-text-stroke:0.3px #0fd892;">0.1</span>
<div class="a" style="box-sizing:border-box;left:720.1px;top:203.2px;width:74.2px;height:35.6px;border-radius:14px;border:1.6px solid #5a50f0;background:#ebeafd"></div>
<span class="t" style="left:746.83px;top:212.52px;font-size:15px;color:#4f46e5;letter-spacing:0.000px;-webkit-text-stroke:0.3px #4f46e5;">0.1</span>
<div class="a" style="box-sizing:border-box;left:720.1px;top:246.0px;width:74.2px;height:35.6px;border-radius:14px;border:1.6px solid #10e09b;background:#e8fbf4"></div>
<span class="t" style="left:746.83px;top:255.32px;font-size:15px;color:#0fd892;letter-spacing:0.000px;-webkit-text-stroke:0.3px #0fd892;">0.1</span>
</div>
<svg style="left:1478.5px;top:952.4px" width="20" height="20" viewBox="-10 -10 20 20"><path d="M-6.3,-6.3 L6.3,6.3 M6.3,-6.3 L-6.3,6.3" stroke="#6c6c6f" stroke-width="1.5" fill="none"/></svg>
<span class="t" style="left:1818.50px;top:990.64px;font-size:23.6px;color:#222;letter-spacing:0.000px;transform:scaleX(1.1205);-webkit-text-stroke:0.75px #222;">Contribution to Growth-Decline Y23</span>
<svg style="left:0;top:0" width="2560" height="1459" viewBox="0 0 2560 1459" font-family="Liberation Sans, sans-serif">
<line x1="1770.1" x2="2365" y1="1064.70" y2="1064.70" stroke="#e0e0e0" stroke-width="1.6"/>
<text x="1749" y="1068.50" font-size="16" fill="#373d3f" text-anchor="end">100.0%</text>
<line x1="1770.1" x2="2365" y1="1099.73" y2="1099.73" stroke="#e0e0e0" stroke-width="1.6"/>
<text x="1749" y="1103.53" font-size="16" fill="#373d3f" text-anchor="end">90.0%</text>
<line x1="1770.1" x2="2365" y1="1134.76" y2="1134.76" stroke="#e0e0e0" stroke-width="1.6"/>
<text x="1749" y="1138.56" font-size="16" fill="#373d3f" text-anchor="end">80.0%</text>
<line x1="1770.1" x2="2365" y1="1169.79" y2="1169.79" stroke="#e0e0e0" stroke-width="1.6"/>
<text x="1749" y="1173.59" font-size="16" fill="#373d3f" text-anchor="end">70.0%</text>
<line x1="1770.1" x2="2365" y1="1204.82" y2="1204.82" stroke="#e0e0e0" stroke-width="1.6"/>
<text x="1749" y="1208.62" font-size="16" fill="#373d3f" text-anchor="end">60.0%</text>
<line x1="1770.1" x2="2365" y1="1239.85" y2="1239.85" stroke="#e0e0e0" stroke-width="1.6"/>
<text x="1749" y="1243.65" font-size="16" fill="#373d3f" text-anchor="end">50.0%</text>
<line x1="1770.1" x2="2365" y1="1274.88" y2="1274.88" stroke="#e0e0e0" stroke-width="1.6"/>
<text x="1749" y="1278.68" font-size="16" fill="#373d3f" text-anchor="end">40.0%</text>
<line x1="1770.1" x2="2365" y1="1309.91" y2="1309.91" stroke="#e0e0e0" stroke-width="1.6"/>
<text x="1749" y="1313.71" font-size="16" fill="#373d3f" text-anchor="end">30.0%</text>
<line x1="1770.1" x2="2365" y1="1344.94" y2="1344.94" stroke="#e0e0e0" stroke-width="1.6"/>
<text x="1749" y="1348.74" font-size="16" fill="#373d3f" text-anchor="end">20.0%</text>
<line x1="1770.1" x2="2365" y1="1379.97" y2="1379.97" stroke="#e0e0e0" stroke-width="1.6"/>
<text x="1749" y="1383.77" font-size="16" fill="#373d3f" text-anchor="end">10.0%</text>
<line x1="1770.1" x2="2365" y1="1415.00" y2="1415.00" stroke="#e0e0e0" stroke-width="1.6"/>
<text x="1749" y="1418.80" font-size="16" fill="#373d3f" text-anchor="end">0.0%</text>
<text transform="translate(1677.8,1234.6) rotate(-90)" font-size="16" font-weight="700" fill="#373d3f" text-anchor="middle">Contribution to Growth</text>
<line x1="1788.75" x2="1788.75" y1="1415.80" y2="1425.00" stroke="#e0e0e0" stroke-width="1.6"/>
<rect x="1781.10" y="1238.7" width="15.3" height="176.30" fill="#00e396"/>
<text x="1788.75" y="1451.3" font-size="13.3" fill="#373d3f" text-anchor="middle">SHAMS</text>
<line x1="1850.65" x2="1850.65" y1="1415.80" y2="1425.00" stroke="#e0e0e0" stroke-width="1.6"/>
<rect x="1843.00" y="1293.1" width="15.3" height="121.90" fill="#00e396"/>
<text x="1850.65" y="1451.3" font-size="13.3" fill="#373d3f" text-anchor="middle">AL ARABI</text>
<line x1="1912.55" x2="1912.55" y1="1415.80" y2="1425.00" stroke="#e0e0e0" stroke-width="1.6"/>
<rect x="1904.90" y="1358.4" width="15.3" height="56.60" fill="#00e396"/>
<text x="1912.55" y="1451.3" font-size="13.3" fill="#373d3f" text-anchor="middle">HAYAT</text>
<line x1="1974.45" x2="1974.45" y1="1415.80" y2="1425.00" stroke="#e0e0e0" stroke-width="1.6"/>
<rect x="1966.80" y="1359.7" width="15.3" height="55.30" fill="#00e396"/>
<text x="1974.45" y="1451.3" font-size="13.3" fill="#373d3f" text-anchor="middle">DALAL</text>
<line x1="2036.35" x2="2036.35" y1="1415.80" y2="1425.00" stroke="#e0e0e0" stroke-width="1.6"/>
<rect x="2028.70" y="1368" width="15.3" height="47.00" fill="#00e396"/>
<text x="2036.35" y="1451.3" font-size="13.3" fill="#373d3f" text-anchor="middle">HALAH</text>
<line x1="2098.25" x2="2098.25" y1="1415.80" y2="1425.00" stroke="#e0e0e0" stroke-width="1.6"/>
<rect x="2090.60" y="1388.2" width="15.3" height="26.80" fill="#00e396"/>
<text x="2098.25" y="1451.3" font-size="13.3" fill="#373d3f" text-anchor="middle">SUNNY</text>
<line x1="2160.15" x2="2160.15" y1="1415.80" y2="1425.00" stroke="#e0e0e0" stroke-width="1.6"/>
<rect x="2152.50" y="1399.2" width="15.3" height="15.80" fill="#00e396"/>
<text x="2160.15" y="1451.3" font-size="13.3" fill="#373d3f" text-anchor="middle">TALEEN</text>
<line x1="2222.05" x2="2222.05" y1="1415.80" y2="1425.00" stroke="#e0e0e0" stroke-width="1.6"/>
<rect x="2214.40" y="1399.6" width="15.3" height="15.40" fill="#00e396"/>
<text x="2222.05" y="1451.3" font-size="13.3" fill="#373d3f" text-anchor="middle">NAKHLATAIN</text>
<line x1="2283.95" x2="2283.95" y1="1415.80" y2="1425.00" stroke="#e0e0e0" stroke-width="1.6"/>
<rect x="2276.30" y="1400.9" width="15.3" height="14.10" fill="#00e396"/>
<line x1="2345.85" x2="2345.85" y1="1415.80" y2="1425.00" stroke="#e0e0e0" stroke-width="1.6"/>
<rect x="2338.20" y="1402.2" width="15.3" height="12.80" fill="#00e396"/>
<text x="2345.85" y="1451.3" font-size="13.3" fill="#373d3f" text-anchor="middle">OLITE</text>
<rect x="1752.60" y="1212.40" width="65.3" height="19.8" rx="3" fill="#2e93fa"/>
<text x="1785.25" y="1228.10" font-size="16" font-weight="700" fill="#fff" text-anchor="middle">50.43%</text>
<rect x="1814.50" y="1266.80" width="65.3" height="19.8" rx="3" fill="#2e93fa"/>
<text x="1847.15" y="1282.50" font-size="16" font-weight="700" fill="#fff" text-anchor="middle">34.92%</text>
<rect x="1876.50" y="1332.10" width="63.4" height="19.8" rx="3" fill="#2e93fa"/>
<text x="1908.20" y="1347.80" font-size="16" font-weight="700" fill="#fff" text-anchor="middle">16.18%</text>
<rect x="1938.45" y="1333.40" width="65" height="19.8" rx="3" fill="#2e93fa"/>
<text x="1970.95" y="1349.10" font-size="16" font-weight="700" fill="#fff" text-anchor="middle">15.74%</text>
<rect x="2000.35" y="1341.70" width="65" height="19.8" rx="3" fill="#2e93fa"/>
<text x="2032.85" y="1357.40" font-size="16" font-weight="700" fill="#fff" text-anchor="middle">13.37%</text>
<rect x="2066.70" y="1361.90" width="56.1" height="19.8" rx="3" fill="#2e93fa"/>
<text x="2094.75" y="1377.60" font-size="16" font-weight="700" fill="#fff" text-anchor="middle">7.74%</text>
<rect x="2128.60" y="1372.90" width="56.1" height="19.8" rx="3" fill="#2e93fa"/>
<text x="2156.65" y="1388.60" font-size="16" font-weight="700" fill="#fff" text-anchor="middle">4.56%</text>
<rect x="2190.50" y="1373.30" width="56.1" height="19.8" rx="3" fill="#2e93fa"/>
<text x="2218.55" y="1389.00" font-size="16" font-weight="700" fill="#fff" text-anchor="middle">4.42%</text>
<rect x="2252.40" y="1374.60" width="56.1" height="19.8" rx="3" fill="#2e93fa"/>
<text x="2280.45" y="1390.30" font-size="16" font-weight="700" fill="#fff" text-anchor="middle">4.02%</text>
<rect x="2319.00" y="1375.90" width="47.4" height="19.8" rx="3" fill="#2e93fa"/>
<text x="2342.70" y="1391.60" font-size="16" font-weight="700" fill="#fff" text-anchor="middle">3.6%</text>
</svg>
</body></html>
